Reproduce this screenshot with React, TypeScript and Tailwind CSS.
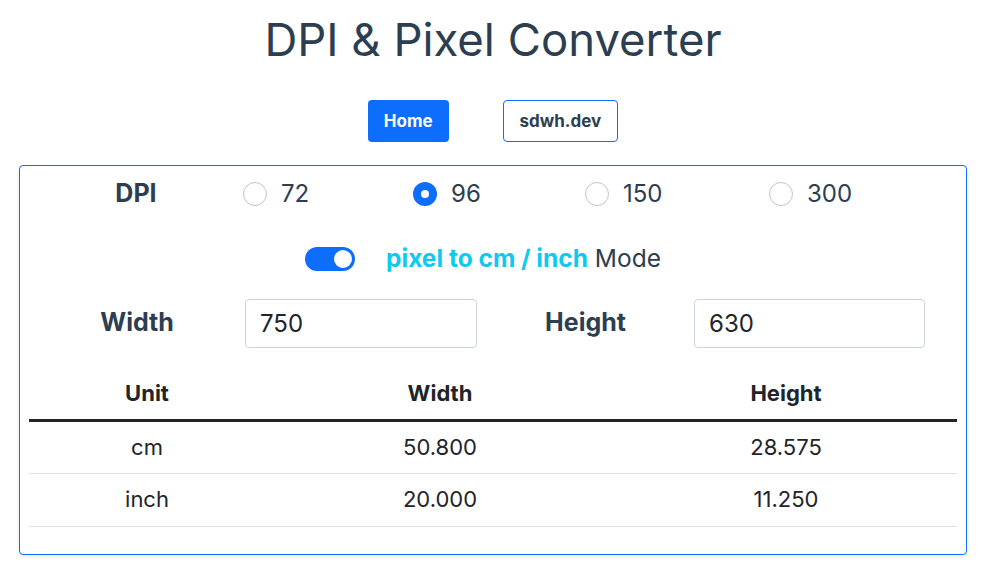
import { useState } from 'react';

const DPIS = [72, 96, 150, 300];

export default function App() {
  const [dpi, setDpi] = useState(96);
  const [mode, setMode] = useState(true);
  const [width, setWidth] = useState('750');
  const [height, setHeight] = useState('630');

  // the original page shows these fixed results
  const rows = [
    { unit: 'cm', w: '50.800', h: '28.575' },
    { unit: 'inch', w: '20.000', h: '11.250' },
  ];

  return (
    <div className="min-h-screen bg-white font-['Inter','Liberation_Sans',sans-serif] text-[#2c3e50]">
      <h1 className="pt-[12px] text-center text-[45.5px] leading-[56px] font-normal">DPI &amp; Pixel Converter</h1>

      <nav className="mt-[32px] flex justify-center gap-[54px]">
        <button className="h-[42px] rounded-[4px] bg-[#0d6efd] px-[16px] pt-[2px] text-[17px] font-bold text-white">Home</button>
        <button className="h-[42px] rounded-[4px] border border-[#0d6efd] bg-white px-[16px] pt-[2px] text-[17px] font-bold text-[#2c3e50]">
          sdwh.dev
        </button>
      </nav>

      <div className="mx-[19px] mt-[23px] h-[390px] rounded-[4px] border border-[#0d6efd] bg-white px-[9px] shadow-[0_2px_4px_rgba(0,0,0,0.08)]">
        {/* dpi */}
        <div className="flex h-[55px] items-center pt-[1px] text-[24px]">
          <div className="w-[214px] text-center text-[25px] font-bold">DPI</div>
          <div className="flex items-center">
            {DPIS.map((d, i) => (
              <label
                key={d}
                className={
                  'flex cursor-pointer items-center gap-[14px] ' +
                  (i === 0 ? 'w-[170px]' : i === 1 ? 'w-[172px]' : i === 2 ? 'w-[184px]' : 'w-[120px]')
                }
                onClick={() => setDpi(d)}
              >
                {dpi === d ? (
                  <span className="flex h-6 w-6 items-center justify-center rounded-full bg-[#0d6efd]">
                    <span className="h-2 w-2 rounded-full bg-white" />
                  </span>
                ) : (
                  <span className="h-6 w-6 rounded-full border border-[#c4c4c4] bg-white" />
                )}
                <span>{d}</span>
              </label>
            ))}
          </div>
        </div>

        {/* mode */}
        <div className="flex h-[75px] items-center justify-center gap-[31px] pr-[20px] text-[24.5px]">
          <button
            onClick={() => setMode(!mode)}
            className="flex h-6 w-[50px] items-center justify-end rounded-full bg-[#0d6efd] px-[3px]"
          >
            <span className="h-[18px] w-[18px] rounded-full bg-white" />
          </button>
          <div>
            <span className="font-bold text-[#0dcaf0]">pixel to cm / inch</span> Mode
          </div>
        </div>

        {/* inputs */}
        <div className="flex h-[54px] items-center text-[25px]">
          <div className="w-[216px] text-center font-bold">Width</div>
          <input
            value={width}
            onChange={(e) => setWidth(e.target.value)}
            className="h-[49px] w-[232px] rounded-[4px] border border-[#ced4da] px-[14px] text-[24px] text-[#212529] outline-none"
          />
          <div className="w-[217px] text-center font-bold">Height</div>
          <input
            value={height}
            onChange={(e) => setHeight(e.target.value)}
            className="h-[49px] w-[231px] rounded-[4px] border border-[#ced4da] px-[14px] text-[24px] text-[#212529] outline-none"
          />
        </div>

        {/* results */}
        <table className="mt-[19px] w-full border-collapse text-[22px] text-[#212529]">
          <thead>
            <tr className="h-[51px] border-b-[3px] border-[#212529]">
              <th className="w-[236px] text-center font-bold">Unit</th>
              <th className="w-[350px] text-center font-bold">Width</th>
              <th className="text-center font-bold">Height</th>
            </tr>
          </thead>
          <tbody>
            {rows.map((r) => (
              <tr key={r.unit} className="h-[53px] border-b border-[#dee2e6]">
                <td className="text-center">{r.unit}</td>
                <td className="text-center">{r.w}</td>
                <td className="text-center">{r.h}</td>
              </tr>
            ))}
          </tbody>
        </table>
      </div>
    </div>
  );
}
